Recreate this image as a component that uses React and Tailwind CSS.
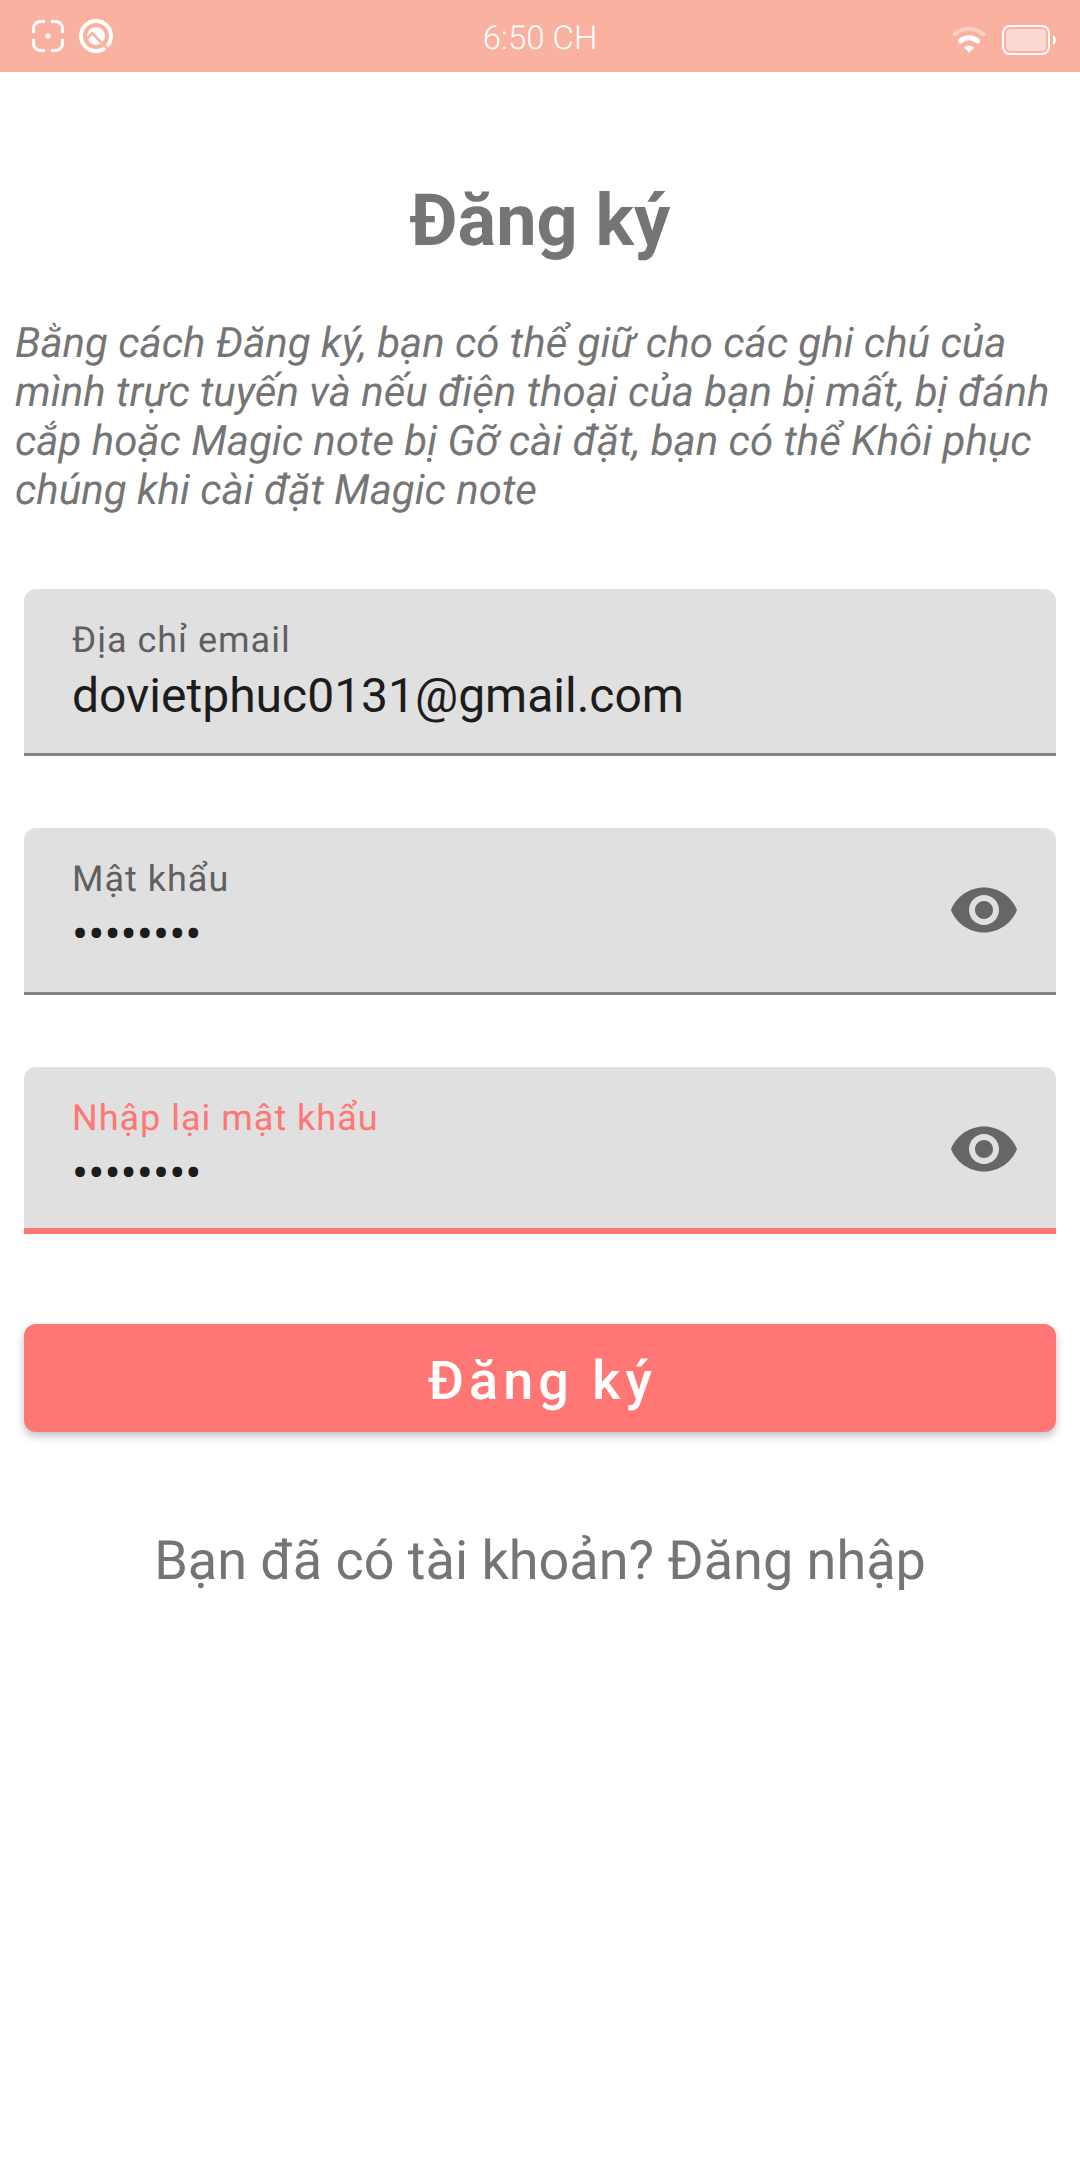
import { useState } from "react";

function ScanIcon() {
  return (
    <svg viewBox="0 0 32 32" className="size-8" fill="none" stroke="#fff" strokeWidth="3" aria-hidden="true">
      <path d="M1.5 13V8.500a7 7 0 0 1 7-7H13M19 1.500h4.500a7 7 0 0 1 7 7V13M30.500 19v4.500a7 7 0 0 1-7 7H19M13 30.500H8.500a7 7 0 0 1-7-7V19" />
      <circle cx="16" cy="16" r="2.6" fill="#fff" stroke="none" />
    </svg>
  );
}

function BrowserIcon() {
  return (
    <svg viewBox="0 0 34 34" className="size-[34px]" aria-hidden="true">
      <circle cx="17" cy="17" r="15" fill="none" stroke="#fff" strokeWidth="4" />
      <circle cx="17" cy="17" r="9" fill="#fff" />
      <path d="M8 20l5-6 16 16" fill="none" stroke="#fab1a0" strokeWidth="2.5" />
    </svg>
  );
}

function WifiIcon() {
  return (
    <svg viewBox="0 0 34 26" className="h-[26px] w-[34px]" fill="none" stroke="#fff" strokeWidth="4" strokeLinecap="round" aria-hidden="true">
      <path d="M2.500 7.500a22 22 0 0 1 29 0" opacity=".4" />
      <path d="M8.500 14a13 13 0 0 1 17 0" strokeWidth="5" />
      <path d="M17 25l-4.500-4.500q4.500-3 9 0z" fill="#fff" strokeWidth="1" strokeLinejoin="round" />
    </svg>
  );
}

function BatteryIcon() {
  return (
    <svg viewBox="0 0 54 30" className="h-[30px] w-[54px]" aria-hidden="true">
      <rect x="1" y="1" width="46" height="28" rx="7" fill="none" stroke="#fff" strokeWidth="2" />
      <rect x="4" y="4" width="40" height="22" rx="4" fill="#fff" opacity=".5" />
      <path d="M51 10.500q3 1 3 4.500t-3 4.500z" fill="#fff" />
    </svg>
  );
}

function EyeIcon() {
  return (
    <svg viewBox="0 0 24 24" className="size-[72px]" fill="#666" aria-hidden="true">
      <path d="M12 4.5C7 4.5 2.73 7.61 1 12c1.73 4.39 6 7.5 11 7.5s9.27-3.11 11-7.5c-1.73-4.39-6-7.5-11-7.5zM12 17c-2.76 0-5-2.24-5-5s2.24-5 5-5 5 2.24 5 5-2.24 5-5 5zm0-8c-1.66 0-3 1.34-3 3s1.34 3 3 3 3-1.34 3-3-1.34-3-3-3z" />
    </svg>
  );
}

function Field({ id, label, value, type = "text", active = false }) {
  const [text, setText] = useState(value);
  const [shown, setShown] = useState(false);
  const secret = type === "password";
  const masked = secret && !shown;
  return (
    <div className={`flex items-center rounded-t-xl bg-[#e0e0e0] pt-7 pr-9 pb-[31px] pl-12 ${active ? "shadow-[inset_0_-6px_0_#ff7675]" : "shadow-[inset_0_-3px_0_#838383]"}`}>
      <div className="flex min-w-0 flex-1 flex-col">
        <label htmlFor={id} className={`pt-0.5 text-[36px] leading-[42px] tracking-[1px] ${active ? "text-[#ff7675]" : "text-[#5f5f5f]"}`}>
          {label}
        </label>
        <input
          id={id}
          type={masked ? "password" : "text"}
          value={text}
          onChange={(e) => setText(e.target.value)}
          className="h-16 w-full bg-transparent pt-1.5 text-[48px] text-[#1c1c1c] outline-none"
        />
      </div>
      {secret && (
        <button type="button" aria-label="Hiện mật khẩu" onClick={() => setShown(!shown)}>
          <EyeIcon />
        </button>
      )}
    </div>
  );
}

export default function App() {
  return (
    <div className="min-h-screen bg-white font-['Roboto',sans-serif] text-[#757575] [text-rendering:geometricPrecision]">
      <header className="grid h-18 grid-cols-3 items-center bg-[#fab1a0] px-6 text-white">
        <div className="flex items-center gap-[15px] pl-2">
          <ScanIcon />
          <BrowserIcon />
        </div>
        <time className="pt-1.5 text-center text-[33px] font-light">6:50 CH</time>
        <div className="flex items-center justify-end gap-4 pt-2">
          <WifiIcon />
          <BatteryIcon />
        </div>
      </header>
      <main className="px-6">
        <h1 className="mt-[107px] text-center text-[72px] leading-[84px] font-bold">Đăng ký</h1>
        <p className="-mx-[9px] mt-14 text-[42px] leading-[49px] italic">
          Bằng cách Đăng ký, bạn có thể giữ cho các ghi chú của mình trực tuyến và nếu điện thoại của bạn bị mất, bị đánh cắp hoặc Magic note bị Gỡ cài đặt, bạn có thể Khôi phục chúng khi cài đặt Magic note
        </p>
        <form className="mt-[74px]" onSubmit={(e) => e.preventDefault()}>
          <div className="flex flex-col gap-[72px]">
            <Field id="email" label="Địa chỉ email" value="dovietphuc0131@gmail.com" />
            <Field id="password" label="Mật khẩu" type="password" value="12345678" />
            <Field id="confirm" label="Nhập lại mật khẩu" type="password" value="12345678" active />
          </div>
          <button type="submit" className="mt-[90px] h-27 w-full rounded-xl bg-[#ff7675] pt-1 pl-[5px] text-[54px] font-medium tracking-[5px] text-white shadow-[0_4px_8px_rgba(0,0,0,0.25)]">
            Đăng ký
          </button>
        </form>
        <a href="#login" className="mt-[98px] block text-center text-[54px] leading-[64px]">
          Bạn đã có tài khoản? Đăng nhập
        </a>
      </main>
    </div>
  );
}
